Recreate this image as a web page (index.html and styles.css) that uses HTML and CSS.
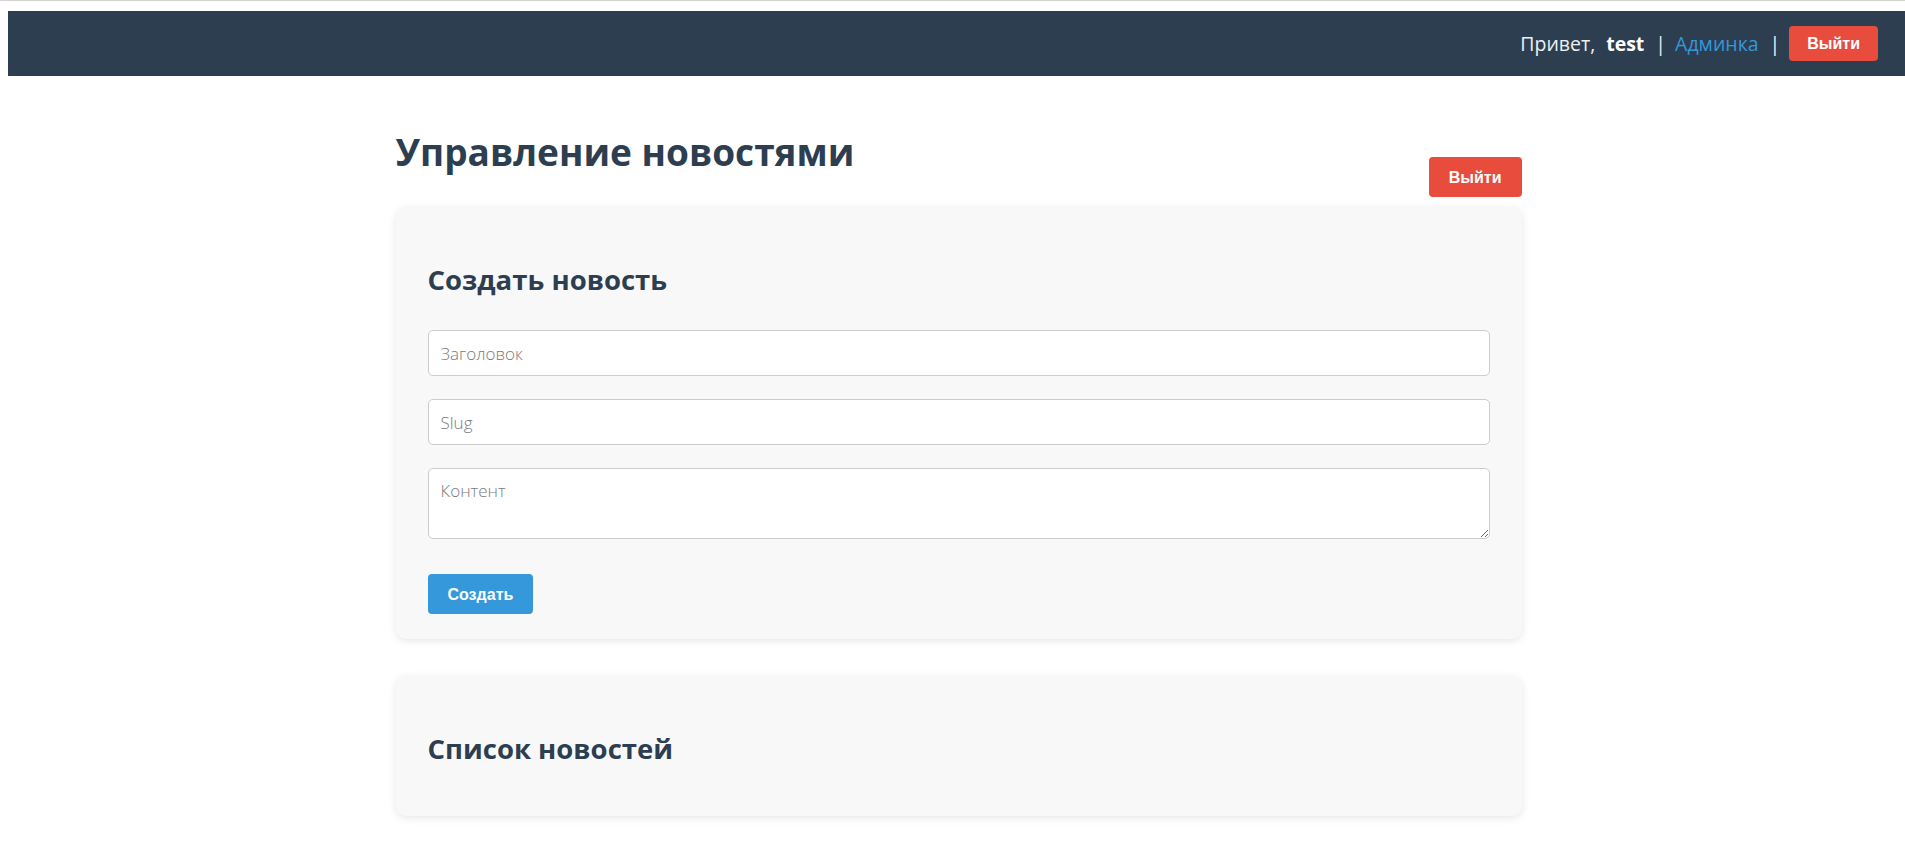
FILE: index.html
```html
<!DOCTYPE html>
<html lang="ru">
<head>
<meta charset="utf-8">
<title>Управление новостями</title>
<link rel="stylesheet" href="styles.css">
</head>
<body>
  <header class="topbar">
    <div class="topbar-user">
      <span class="greet">Привет,</span>
      <strong class="username">test</strong>
      <span class="sep">|</span>
      <a class="admin-link" href="#">Админка</a>
      <span class="sep">|</span>
      <button class="btn btn-danger btn-small" type="button">Выйти</button>
    </div>
  </header>

  <main class="page">
    <div class="page-head">
      <h1 class="page-title">Управление новостями</h1>
      <button class="btn btn-danger" type="button">Выйти</button>
    </div>

    <section class="card">
      <h2 class="card-title">Создать новость</h2>
      <form class="news-form">
        <input class="field" type="text" placeholder="Заголовок">
        <input class="field" type="text" placeholder="Slug">
        <textarea class="field field-area" placeholder="Контент"></textarea>
        <button class="btn btn-primary" type="button">Создать</button>
      </form>
    </section>

    <section class="card card-list">
      <h2 class="card-title card-title-list">Список новостей</h2>
    </section>
  </main>
</body>
</html>
```

FILE: styles.css
```css
* { box-sizing: border-box; }

html, body {
  margin: 0;
  padding: 0;
  background: #ffffff;
}

body {
  border-top: 1px solid #d3d3d3;
  padding-top: 10px;
  font-family: "Open Sans", "Noto Sans", sans-serif;
  color: #2c3e50;
}

.topbar {
  margin-left: 8px;
  height: 65px;
  background: #2d3e50;
  display: flex;
  align-items: center;
  justify-content: flex-end;
  padding-right: 27px;
}

.topbar-user {
  display: flex;
  align-items: center;
  font-size: 19.5px;
  color: #ecf0f1;
}

.greet { margin-right: 11px; }
.username { color: #ffffff; font-weight: 700; }
.sep { margin: 0 9px 0 11px; color: #ecf0f1; }
.admin-link { color: #3498db; text-decoration: none; }

.btn {
  border: 0;
  border-radius: 4px;
  font-family: "Liberation Sans", Arial, sans-serif;
  font-weight: 700;
  font-size: 16px;
  line-height: 19px;
  color: #ffffff;
  padding: 10.5px 20px;
  cursor: pointer;
}

.btn-small {
  padding: 8px 18px;
}

.btn-danger { background: #e74c3c; }
.btn-primary { background: #3498db; }

.page {
  width: 1126px;
  margin: 53px 0 0 calc(50% - 557px);
}

.page-head {
  display: flex;
  justify-content: space-between;
  align-items: flex-end;
  margin-bottom: 10px;
}

.page-title {
  margin: 0 0 22px;
  font-size: 37px;
  line-height: 46px;
  font-weight: 700;
  color: #2c3e50;
}

.card {
  background: #f8f8f8;
  border-radius: 10px;
  box-shadow: 0 2px 8px rgba(0, 0, 0, 0.1);
  padding: 30px 32px 25px;
  margin-bottom: 37px;
}

.card-title {
  margin: 25px 0 32px;
  font-size: 27.5px;
  line-height: 36px;
  font-weight: 700;
  color: #2c3e50;
}

.card-title-list {
  margin-bottom: 24px;
}

.news-form {
  display: flex;
  flex-direction: column;
  align-items: flex-start;
}

.field {
  display: block;
  width: 100%;
  height: 46px;
  margin: 0 0 23px;
  padding: 0 12px;
  border: 1px solid #cccccc;
  border-radius: 5px;
  background: #ffffff;
  font-family: "Open Sans", "Noto Sans", sans-serif;
  font-size: 17px;
  font-weight: 300;
  color: #333333;
}

.field::placeholder { color: #7a7a7a; }

.field-area {
  height: 71px;
  padding: 12px;
  line-height: 20px;
  resize: vertical;
}

.news-form .btn {
  margin-top: 12px;
}
```
